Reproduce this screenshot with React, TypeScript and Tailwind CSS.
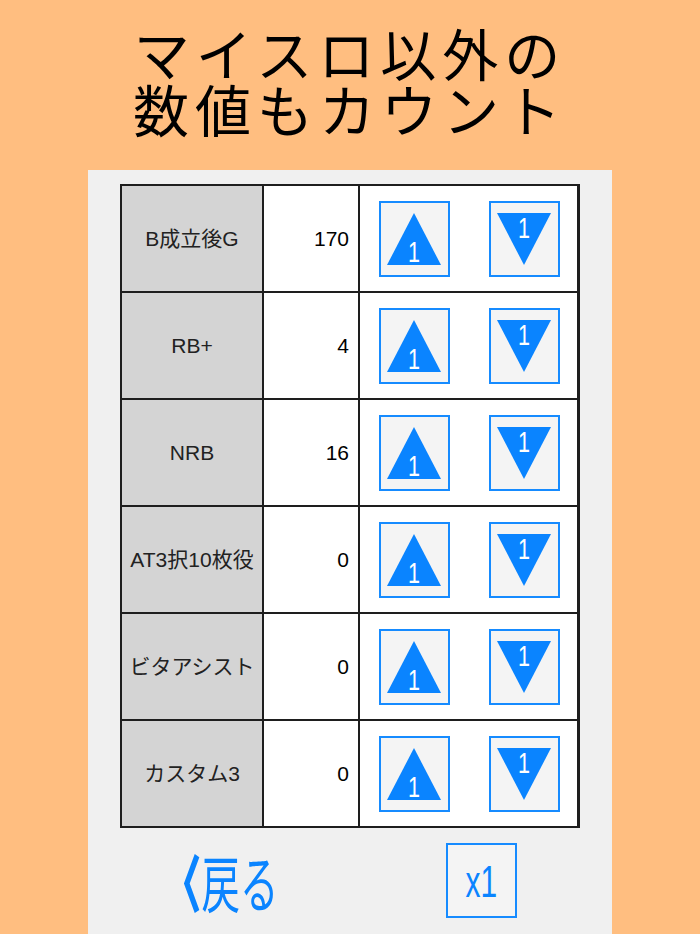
const rows = [
  { label: "B成立後G", value: 170 },
  { label: "RB+", value: 4 },
  { label: "NRB", value: 16 },
  { label: "AT3択10枚役", value: 0 },
  { label: "ビタアシスト", value: 0 },
  { label: "カスタム3", value: 0 },
];

const jp = { fontFamily: '"Liberation Sans", "Noto Sans CJK JP", sans-serif' };

function ArrowButton({ dir }: { dir: "up" | "down" }) {
  const up = dir === "up";
  return (
    <button
      type="button"
      className="h-[76px] w-[71px] border-2 border-[#168bff] bg-[#f4f4f4] p-0"
    >
      <svg viewBox="0 0 67 72" width="67" height="72" className="block">
        <polygon
          points={up ? "33,10 60,62 6,62" : "6,10 60,10 33,62"}
          fill="#0a84ff"
        />
        <text
          transform={up ? "translate(33 59) scale(0.72 1)" : "translate(33 35) scale(0.72 1)"}
          textAnchor="middle"
          fill="#ffffff"
          fontSize="30"
          fontFamily="Liberation Sans, sans-serif"
        >
          1
        </text>
      </svg>
    </button>
  );
}

export default function App() {
  return (
    <div className="flex h-[934px] w-[700px] flex-col items-center overflow-hidden bg-[#ffbe80]">
      <h1
        className="pt-[24px] text-center text-[56px] leading-[56px] font-normal tracking-[6px] text-black"
        style={{ fontFamily: '"Noto Sans CJK JP", sans-serif' }}
      >
        マイスロ以外の
        <br />
        数値もカウント
      </h1>

      <div className="mt-[34px] flex w-[524px] flex-1 flex-col bg-[#f0f0f0] px-[32px] pt-[14px]">
        <div className="grid grid-cols-[140px_94px_217px] gap-[2px] border-2 border-[#1e1e1e] bg-[#1e1e1e]" style={jp}>
          {rows.map((r) => (
            <div key={r.label} className="contents">
              <div className="flex h-[105px] items-center justify-center bg-[#d4d4d4] text-[21px] text-[#222]">
                {r.label}
              </div>
              <div className="flex h-[105px] items-center justify-end bg-white pr-[9px] text-[21px] text-black">
                {r.value}
              </div>
              <div className="flex h-[105px] items-center gap-[39px] bg-white pl-[19px]">
                <ArrowButton dir="up" />
                <ArrowButton dir="down" />
              </div>
            </div>
          ))}
        </div>

        <div className="mt-[15px] flex items-start">
          <div className="flex h-[75px] w-[326px] items-center pl-[43px]">
            <button
              type="button"
              className="origin-left scale-x-[0.62] whitespace-nowrap text-[62px] leading-none font-normal text-[#0a84ff]"
              style={{ fontFamily: '"Noto Sans CJK JP", sans-serif' }}
            >
              <span className="font-black">〈</span>戻る
            </button>
          </div>
          <button
            type="button"
            className="flex h-[75px] w-[71px] items-center justify-center border-2 border-[#168bff] bg-[#f4f4f4]"
          >
            <span
              className="inline-block scale-x-[0.68] pt-[3px] text-[44px] leading-none text-[#0a84ff]"
              style={{ fontFamily: '"Liberation Sans", sans-serif' }}
            >
              x1
            </span>
          </button>
        </div>
      </div>
    </div>
  );
}
